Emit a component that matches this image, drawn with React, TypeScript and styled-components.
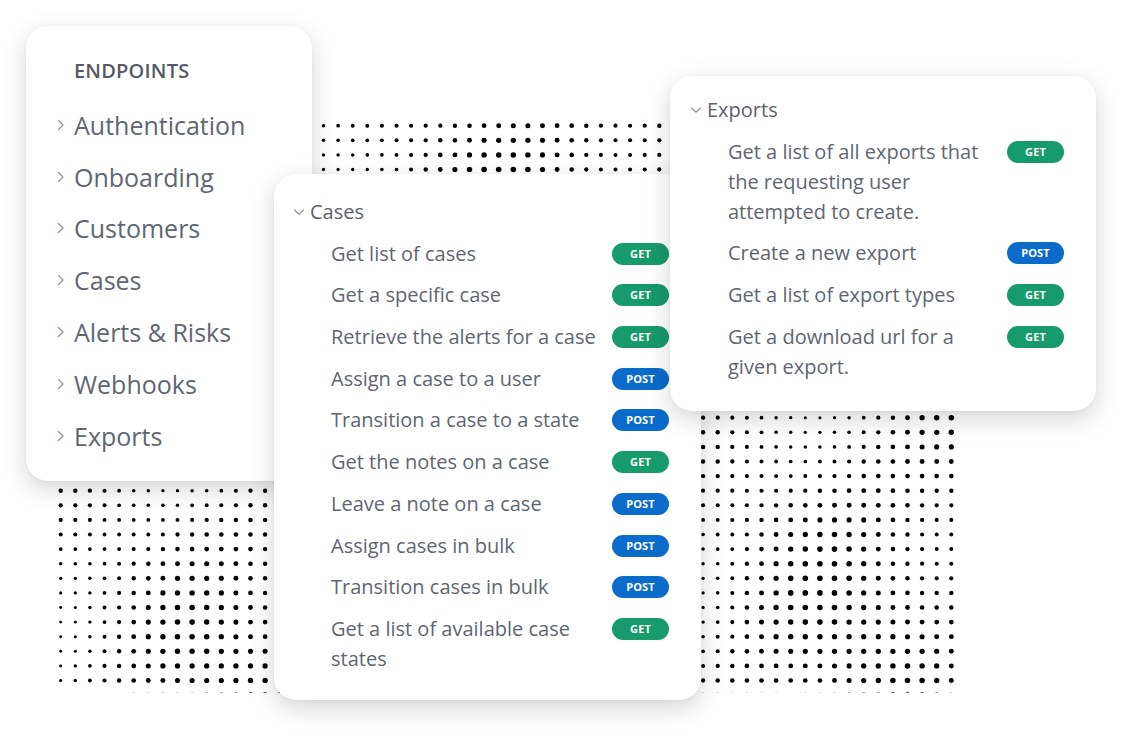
import React, {useMemo} from 'react';
import styled, {createGlobalStyle} from 'styled-components';

const GlobalStyle = createGlobalStyle`
  html, body {
    margin: 0;
    padding: 0;
    background: #ffffff;
  }
  body {
    font-family: "Open Sans", "Noto Sans", "Liberation Sans", sans-serif;
    color: #5f6570;
    overflow: hidden;
  }
`

const Canvas = styled.div`
  position: relative;
  width: 1142px;
  height: 746px;
  overflow: hidden;
  background: #fff;
`

const DotLayer = styled.svg`
  position: absolute;
  left: 0;
  top: 0;
`

const Card = styled.div<{ $x: number, $y: number, $w: number, $z: number }>`
  position: absolute;
  left: ${p => p.$x}px;
  top: ${p => p.$y}px;
  width: ${p => p.$w}px;
  z-index: ${p => p.$z};
  box-sizing: border-box;
  background: #fff;
  border-radius: 22px;
  box-shadow: 0 8px 26px rgba(0, 0, 0, 0.17), 0 1px 4px rgba(0, 0, 0, 0.04);
`

const EndpointsBody = styled.div`
  padding: 30px 20px 19px 29px;
  display: flex;
  flex-direction: column;
`

const Heading = styled.div`
  margin-left: 19px;
  font-size: 20px;
  font-weight: 600;
  line-height: 30px;
  letter-spacing: 0.2px;
  color: #545a64;
  margin-bottom: 13px;
`

const NavItem = styled.div`
  display: flex;
  align-items: center;
  gap: 8px;
  height: 51.8px;
  font-size: 25px;
  color: #60666f;
`

const Chev = styled.svg`
  flex: none;
  color: #8f949b;
`

const GroupBody = styled.div<{ $top: number, $bottom: number, $left: number }>`
  padding: ${p => p.$top}px 32px ${p => p.$bottom}px ${p => p.$left}px;
  display: flex;
  flex-direction: column;
  gap: 11.7px;
`

const GroupTitle = styled.div`
  display: flex;
  align-items: center;
  gap: 5px;
  font-size: 20px;
  line-height: 30px;
  color: #5c626b;
`

const Row = styled.div<{ $indent: number }>`
  display: flex;
  align-items: flex-start;
  justify-content: space-between;
  padding-left: ${p => p.$indent}px;
`

const RowText = styled.div<{ $w: number }>`
  width: ${p => p.$w}px;
  font-size: 20px;
  line-height: 30px;
  color: #60666f;
`

const Badge = styled.span<{ $method: 'GET' | 'POST' }>`
  flex: none;
  margin-top: 4px;
  width: 57px;
  height: 22px;
  border-radius: 11px;
  background: ${p => p.$method === 'GET' ? '#179a6c' : '#0b6bcb'};
  color: #fff;
  font-size: 11px;
  font-weight: 700;
  line-height: 22px;
  text-align: center;
  letter-spacing: 0.1px;
`

const RightChevron = () => (
    <Chev width="11" height="14" viewBox="0 0 11 14">
        <path d="M3.5 2.5 L8 7 L3.5 11.5" fill="none" stroke="currentColor" strokeWidth="1.3" strokeLinecap="round"
              strokeLinejoin="round"/>
    </Chev>
)

const DownChevron = () => (
    <Chev width="12" height="10" viewBox="0 0 12 10">
        <path d="M1.5 3 L6 7.2 L10.5 3" fill="none" stroke="currentColor" strokeWidth="1.2" strokeLinecap="round"
              strokeLinejoin="round"/>
    </Chev>
)

const endpoints = ['Authentication', 'Onboarding', 'Customers', 'Cases', 'Alerts & Risks', 'Webhooks', 'Exports']

type Method = 'GET' | 'POST'

const cases: [string, Method][] = [
    ['Get list of cases', 'GET'],
    ['Get a specific case', 'GET'],
    ['Retrieve the alerts for a case', 'GET'],
    ['Assign a case to a user', 'POST'],
    ['Transition a case to a state', 'POST'],
    ['Get the notes on a case', 'GET'],
    ['Leave a note on a case', 'POST'],
    ['Assign cases in bulk', 'POST'],
    ['Transition cases in bulk', 'POST'],
    ['Get a list of available case states', 'GET'],
]

const exportsList: [string, Method][] = [
    ['Get a list of all exports that the requesting user attempted to create.', 'GET'],
    ['Create a new export', 'POST'],
    ['Get a list of export types', 'GET'],
    ['Get a download url for a given export.', 'GET'],
]

// halftone dot field behind the cards
function Dots() {
    const dots = useMemo(() => {
        const out: { x: number, y: number, r: number }[] = []
        for (let row = 0; row < 40; row++) {
            for (let col = 0; col < 62; col++) {
                const x = 60.7 + col * 14.6
                const y = 125.7 + row * 14.6
                const n = 0.5
                    + 0.3 * Math.sin(x * 0.011 + y * 0.007 + 0.4)
                    + 0.22 * Math.sin(x * 0.019 - y * 0.016 + 1.7)
                    + 0.15 * Math.cos(x * 0.031 + y * 0.023 - 0.6)
                const t = Math.max(0, Math.min(1, n))
                out.push({x, y, r: 1.45 + 1.35 * t})
            }
        }
        return out
    }, [])
    return (
        <DotLayer width="1142" height="746" viewBox="0 0 1142 746">
            <defs>
                <clipPath id="dot-clip">
                    <rect x="0" y="0" width="1142" height="693"/>
                </clipPath>
            </defs>
            <g clipPath="url(#dot-clip)" fill="#000">
                {dots.map((d, i) => <circle key={i} cx={d.x} cy={d.y} r={d.r}/>)}
            </g>
        </DotLayer>
    )
}

function EndpointGroup({title, items, textWidth, top, bottom, left, indent}: {
    title: string, items: [string, Method][], textWidth: number,
    top: number, bottom: number, left: number, indent: number
}) {
    return (
        <GroupBody $top={top} $bottom={bottom} $left={left}>
            <GroupTitle><DownChevron/>{title}</GroupTitle>
            {items.map(([label, method]) => (
                <Row key={label} $indent={indent}>
                    <RowText $w={textWidth}>{label}</RowText>
                    <Badge $method={method}>{method}</Badge>
                </Row>
            ))}
        </GroupBody>
    )
}

export default function App() {
    return (
        <Canvas>
            <GlobalStyle/>
            <Dots/>
            <Card $x={26} $y={26} $w={286} $z={1}>
                <EndpointsBody>
                    <Heading>ENDPOINTS</Heading>
                    {endpoints.map(name => (
                        <NavItem key={name}><RightChevron/>{name}</NavItem>
                    ))}
                </EndpointsBody>
            </Card>
            <Card $x={274} $y={174} $w={427} $z={2}>
                <EndpointGroup title="Cases" items={cases} textWidth={270}
                               top={23} bottom={26} left={19} indent={38}/>
            </Card>
            <Card $x={670} $y={76} $w={426} $z={3}>
                <EndpointGroup title="Exports" items={exportsList} textWidth={252}
                               top={19} bottom={29} left={20} indent={38}/>
            </Card>
        </Canvas>
    );
}
